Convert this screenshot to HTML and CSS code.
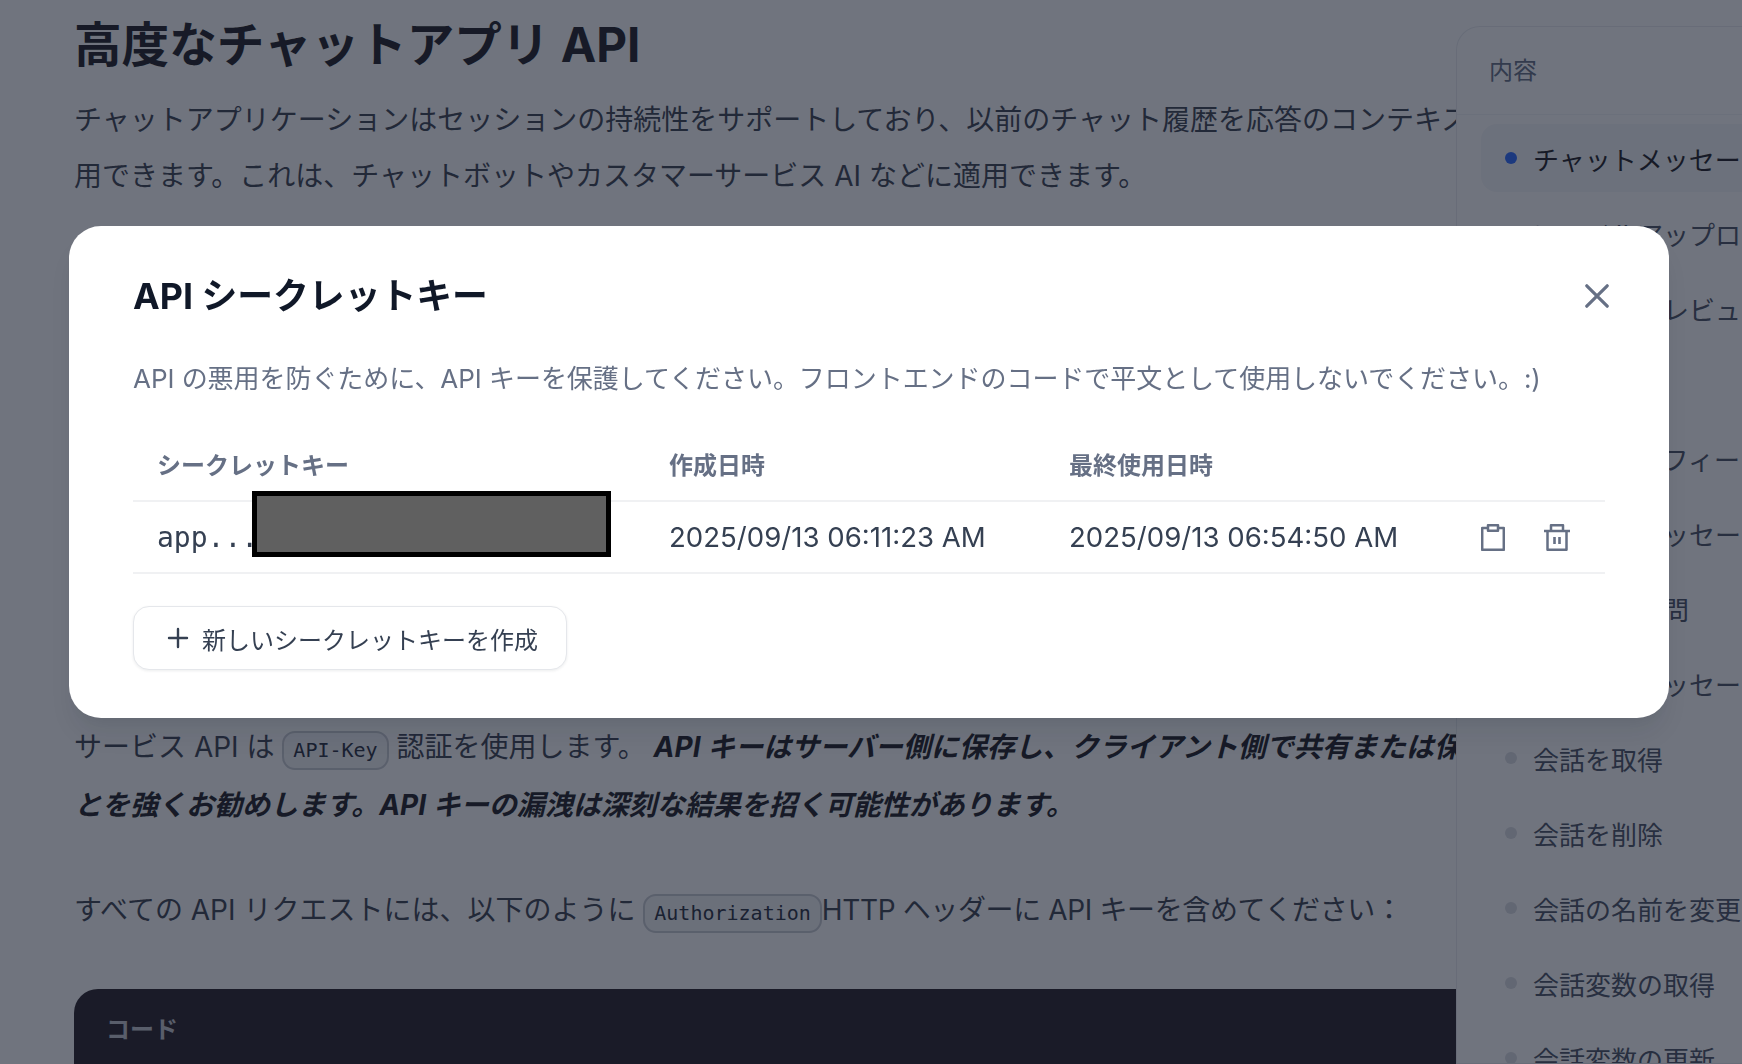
FILE: index.html
```html
<!DOCTYPE html>
<html lang="ja">
<head>
<meta charset="utf-8">
<title>高度なチャットアプリ API</title>
<link rel="stylesheet" href="styles.css">
</head>
<body>
<div class="page">
  <main class="doc">
    <h1 class="doc-title">高度なチャットアプリ API</h1>
    <p class="para">チャットアプリケーションはセッションの持続性をサポートしており、以前のチャット履歴を応答のコンテキストとして使<br>用できます。これは、チャットボットやカスタマーサービス AI などに適用できます。</p>
    <section class="auth">
      <p class="para para-tall">サービス API は <code class="pill">API-Key</code> 認証を使用します。 <strong class="warn">API キーはサーバー側に保存し、クライアント側で共有または保存しないこ<br>とを強くお勧めします。API キーの漏洩は深刻な結果を招く可能性があります。</strong></p>
      <p class="para para-gap">すべての API リクエストには、以下のように <code class="pill">Authorization</code><span class="tight">HTTP ヘッダーに API キーを含めてください：</span></p>
    </section>
    <div class="code-card"><div class="code-head">コード</div></div>
  </main>
  <aside class="toc">
    <div class="toc-title">内容</div>
    <ul class="toc-list">
      <li class="toc-item active"><span class="dot"></span>チャットメッセージを送信</li>
      <li class="toc-item"><span class="dot"></span>ファイルアップロード</li>
      <li class="toc-item"><span class="dot"></span>ファイルプレビュー</li>
      <li class="toc-item"><span class="dot"></span>生成を停止</li>
      <li class="toc-item"><span class="dot"></span>メッセージフィードバック</li>
      <li class="toc-item"><span class="dot"></span>アプリのメッセージ</li>
      <li class="toc-item"><span class="dot"></span>次の推奨質問</li>
      <li class="toc-item"><span class="dot"></span>会話履歴メッセージ</li>
      <li class="toc-item"><span class="dot"></span>会話を取得</li>
      <li class="toc-item"><span class="dot"></span>会話を削除</li>
      <li class="toc-item"><span class="dot"></span>会話の名前を変更</li>
      <li class="toc-item"><span class="dot"></span>会話変数の取得</li>
      <li class="toc-item"><span class="dot"></span>会話変数の更新</li>
    </ul>
  </aside>
</div>

<div class="overlay">
  <div class="modal">
    <div class="modal-head">
      <h2 class="modal-title">API シークレットキー</h2>
      <button class="close" type="button" aria-label="閉じる">
        <svg class="close-icon" viewBox="0 0 24 24" fill="none" stroke="currentColor" stroke-width="3.2" stroke-linecap="round"><path d="M1.8 1.8 22.2 22.2M22.2 1.8 1.8 22.2"/></svg>
      </button>
    </div>
    <p class="modal-desc">API の悪用を防ぐために、API キーを保護してください。フロントエンドのコードで平文として使用しないでください。:)</p>
    <div class="keys">
      <div class="keys-row keys-header">
        <div>シークレットキー</div>
        <div>作成日時</div>
        <div>最終使用日時</div>
        <div></div>
      </div>
      <div class="keys-row keys-body">
        <div class="key-cell"><span class="key-mono">app...</span><span class="redact"></span></div>
        <div>2025/09/13 06:11:23 AM</div>
        <div>2025/09/13 06:54:50 AM</div>
        <div class="key-actions">
          <svg class="act-copy" viewBox="0 0 24 27" fill="none" stroke="currentColor" stroke-width="2.5" stroke-linejoin="round"><path d="M7 4H1.2v21.8h21.6V4H17"/><path d="M7 1.2h10v5.6H7z"/></svg>
          <svg class="act-trash" viewBox="0 0 26 27" fill="none" stroke="currentColor" stroke-width="2.5" stroke-linejoin="round"><path d="M0 7h26"/><path d="M7 7V1.2h12V7"/><path d="M3.5 7v18.8h19V7"/><path d="M10.5 13v7M15.5 13v7" stroke-width="2.6"/></svg>
        </div>
      </div>
    </div>
    <button class="create" type="button">
      <svg class="plus" viewBox="0 0 22 22" fill="none" stroke="currentColor" stroke-width="2.4" stroke-linecap="round"><path d="M11 2v18M2 11h18"/></svg>
      新しいシークレットキーを作成
    </button>
  </div>
</div>
</body>
</html>
```

FILE: styles.css
```css
* { box-sizing: border-box; }

html, body {
  margin: 0;
  height: 100%;
  overflow: hidden;
  background: #fff;
}

body {
  font-family: Inter, "Noto Sans CJK JP", sans-serif;
  color: #374151;
}

.page {
  display: grid;
  grid-template-columns: 1456px 1fr;
  height: 1064px;
  overflow: hidden;
}

/* Document column */
.doc {
  padding: 17px 0 0 74px;
  overflow: hidden;
  white-space: nowrap;
}

.doc-title {
  margin: 0 0 19px;
  font-size: 47.6px;
  line-height: 56px;
  font-weight: 700;
  color: #221f26;
}

.para {
  margin: 0;
  font-size: 28px;
  line-height: 56px;
  color: #3e4452;
}

.para-tall { line-height: 58px; }
.para-gap { margin-top: 48px; }

.tight { letter-spacing: -0.37px; }

.auth { margin-top: 514px; }

.warn {
  font-style: italic;
  font-weight: 700;
  color: #221f26;
}

.pill {
  display: inline-block;
  height: 39px;
  padding: 0 9px;
  font-family: "DejaVu Sans Mono", monospace;
  font-size: 20px;
  line-height: 35px;
  color: #2a3040;
  background: #f3f4f6;
  border: 2px solid #c9ccd2;
  border-radius: 13px;
  vertical-align: 0;
}

.code-card {
  margin: 51px -40px 0 0;
  height: 240px;
  background: #292228;
  border-radius: 24px 24px 0 0;
}

.code-head {
  padding: 24px 32px;
  font-size: 24px;
  line-height: 34px;
  font-weight: 700;
  color: #c6c8cf;
}

/* Table of contents */
.toc {
  margin-top: 26px;
  border: 1px solid #eaecf0;
  border-right: 0;
  border-radius: 24px 0 0 0;
  overflow: hidden;
  white-space: nowrap;
}

.toc-title {
  padding: 26px 32px 0;
  height: 88px;
  font-size: 24px;
  line-height: 36px;
  color: #667085;
  border-bottom: 1px solid #f2f4f7;
}

.toc-list {
  display: flex;
  flex-direction: column;
  gap: 7px;
  margin: 9px 0 0 24px;
  padding: 0;
  list-style: none;
}

.toc-item {
  display: flex;
  align-items: center;
  gap: 16px;
  height: 68px;
  padding-left: 24px;
  font-size: 26px;
  color: #4b5365;
  border-radius: 16px 0 0 16px;
}

.toc-item.active {
  color: #221f26;
  background: #f6f7f9;
}

.dot {
  flex: none;
  width: 12px;
  height: 12px;
  border-radius: 50%;
  background: #dcdee3;
}

.active .dot { background: #2d6cff; }

/* Modal */
.overlay {
  position: fixed;
  inset: 0;
  padding: 226px 0 0 69px;
  background: rgba(16, 24, 40, 0.6);
}

.modal {
  width: 1600px;
  height: 492px;
  padding: 45px 64px 0;
  background: #fff;
  border-radius: 32px;
  box-shadow: 0 20px 24px -4px rgba(16, 24, 40, 0.08), 0 8px 8px -4px rgba(16, 24, 40, 0.03);
}

.modal-head {
  display: flex;
  justify-content: space-between;
  align-items: center;
  height: 50px;
}

.modal-title {
  margin: 0;
  font-size: 35.8px;
  line-height: 50px;
  font-weight: 700;
  color: #101828;
}

.close {
  display: flex;
  margin: -1px -4px 0 0;
  padding: 0;
  border: 0;
  background: none;
  color: #667085;
}

.close-icon {
  width: 24px;
  height: 24px;
}

.modal-desc {
  margin: 38px 0 0;
  font-size: 26px;
  line-height: 40px;
  letter-spacing: -0.05px;
  color: #667085;
  white-space: nowrap;
}

.keys {
  margin-top: 39px;
  width: 1472px;
}

.keys-row {
  display: grid;
  grid-template-columns: 512px 400px 1fr 124px;
  padding-left: 24px;
  align-items: center;
}

.keys-header {
  height: 64px;
  padding-bottom: 12px;
  font-size: 24px;
  font-weight: 700;
  color: #667085;
  border-bottom: 2px solid #f0f1f3;
}

.keys-body {
  height: 72px;
  font-size: 27.6px;
  color: #354052;
  border-bottom: 2px solid #f0f1f3;
}

.key-cell { position: relative; }

.key-mono {
  font-family: "DejaVu Sans Mono", monospace;
  font-size: 28px;
}

.redact {
  position: absolute;
  left: 95px;
  top: -29px;
  width: 359px;
  height: 66px;
  background: #606060;
  border: 5px solid #000;
}

.key-actions {
  display: flex;
  align-items: center;
  gap: 38px;
  color: #667085;
}

.act-copy { width: 24px; height: 27px; }
.act-trash { width: 26px; height: 27px; margin-left: 1px; }

.create {
  display: flex;
  align-items: center;
  gap: 13px;
  margin-top: 32px;
  width: 434px;
  height: 64px;
  padding: 0 28px 0 33px;
  font: inherit;
  font-size: 24px;
  color: #354052;
  background: #fff;
  border: 1px solid #e5e7eb;
  border-radius: 16px;
  box-shadow: 0 1px 3px rgba(16, 24, 40, 0.08);
  white-space: nowrap;
}

.plus {
  flex: none;
  width: 22px;
  height: 22px;
}
```
